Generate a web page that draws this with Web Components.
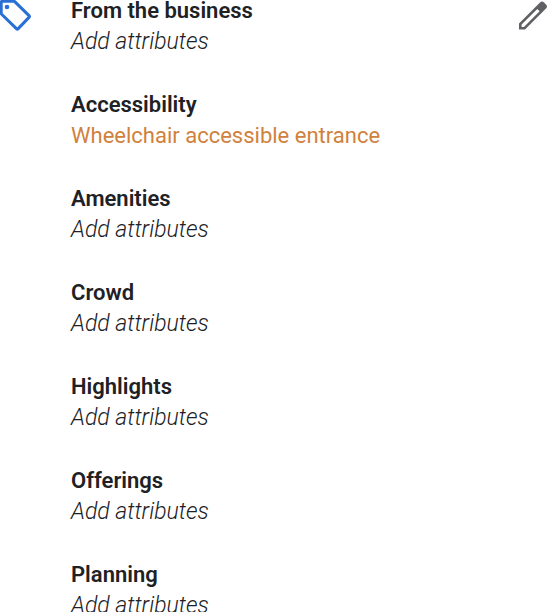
<!DOCTYPE html>
<html lang="en">
<head>
<meta charset="utf-8">
<title>Business attributes</title>
<style>
body { margin: 0; background: #fff; color: #202124; font-family: Roboto, "Liberation Sans", sans-serif; overflow: hidden; }
</style>
</head>
<body>
<attribute-panel>
  <attribute-group heading="From the business"></attribute-group>
  <attribute-group heading="Accessibility" value="Wheelchair accessible entrance"></attribute-group>
  <attribute-group heading="Amenities"></attribute-group>
  <attribute-group heading="Crowd"></attribute-group>
  <attribute-group heading="Highlights"></attribute-group>
  <attribute-group heading="Offerings"></attribute-group>
  <attribute-group heading="Planning"></attribute-group>
</attribute-panel>
<script>
class TagIcon extends HTMLElement {
  connectedCallback() {
    this.attachShadow({ mode: "open" }).innerHTML = `
      <style>:host { display: block; width: 32px; height: 32px; } svg { display: block; }</style>
      <svg width="32" height="32" viewBox="0 0 32 32" fill="none" aria-hidden="true">
        <path d="M1.2 2.5Q1.2 1.2 2.5 1.2H13.5Q14.3 1.2 15 1.9L29 15.6Q29.9 16.5 29 17.4L18.2 28.6Q17.3 29.5 16.4 28.6L1.9 14.5Q1.2 13.8 1.2 13Z" stroke="#2870d6" stroke-width="3"/>
        <circle cx="7" cy="7" r="2.3" fill="#2870d6"/>
      </svg>`;
  }
}
class EditButton extends HTMLElement {
  connectedCallback() {
    this.attachShadow({ mode: "open" }).innerHTML = `
      <style>:host { display: block; } button { display: block; border: 0; padding: 0; background: none; color: #5f6063; cursor: pointer; } svg { display: block; }</style>
      <button type="button" aria-label="Edit attributes">
        <svg width="28" height="32" viewBox="0 0 28 32" fill="currentColor" aria-hidden="true">
          <path fill-rule="evenodd" d="M0 23.5L21 2.5Q23 .5 25 2.5L27 4.5Q29 6.5 27 8.5L6 29.5H0ZM2.6 24.6V26.9H4.9L20.6 11.2L18.3 8.9Z"/>
        </svg>
      </button>`;
  }
}
class AttributeGroup extends HTMLElement {
  connectedCallback() {
    const value = this.getAttribute("value");
    const root = this.attachShadow({ mode: "open" });
    root.innerHTML = `
      <style>
        :host { display: block; font-size: 22px; }
        h2, p { margin: 0; font-size: inherit; line-height: 31px; white-space: nowrap; }
        h2 { font-weight: 600; }
        p { font-style: italic; font-size: 23px; font-weight: 300; }
        p.set { font-style: normal; font-size: 22px; font-weight: 400; color: #d0813c; }
      </style>
      <h2></h2><p></p>`;
    root.querySelector("h2").textContent = this.getAttribute("heading");
    const p = root.querySelector("p");
    p.textContent = value || "Add attributes";
    p.classList.toggle("set", Boolean(value));
  }
}
class AttributePanel extends HTMLElement {
  connectedCallback() {
    this.attachShadow({ mode: "open" }).innerHTML = `
      <style>
        :host { display: flex; align-items: flex-start; }
        .groups { flex: 1; display: grid; gap: 32px; margin: -5px 0 0 39px; }
      </style>
      <tag-icon></tag-icon>
      <div class="groups"><slot></slot></div>
      <edit-button></edit-button>`;
  }
}
customElements.define("tag-icon", TagIcon);
customElements.define("edit-button", EditButton);
customElements.define("attribute-group", AttributeGroup);
customElements.define("attribute-panel", AttributePanel);
</script>
</body>
</html>
